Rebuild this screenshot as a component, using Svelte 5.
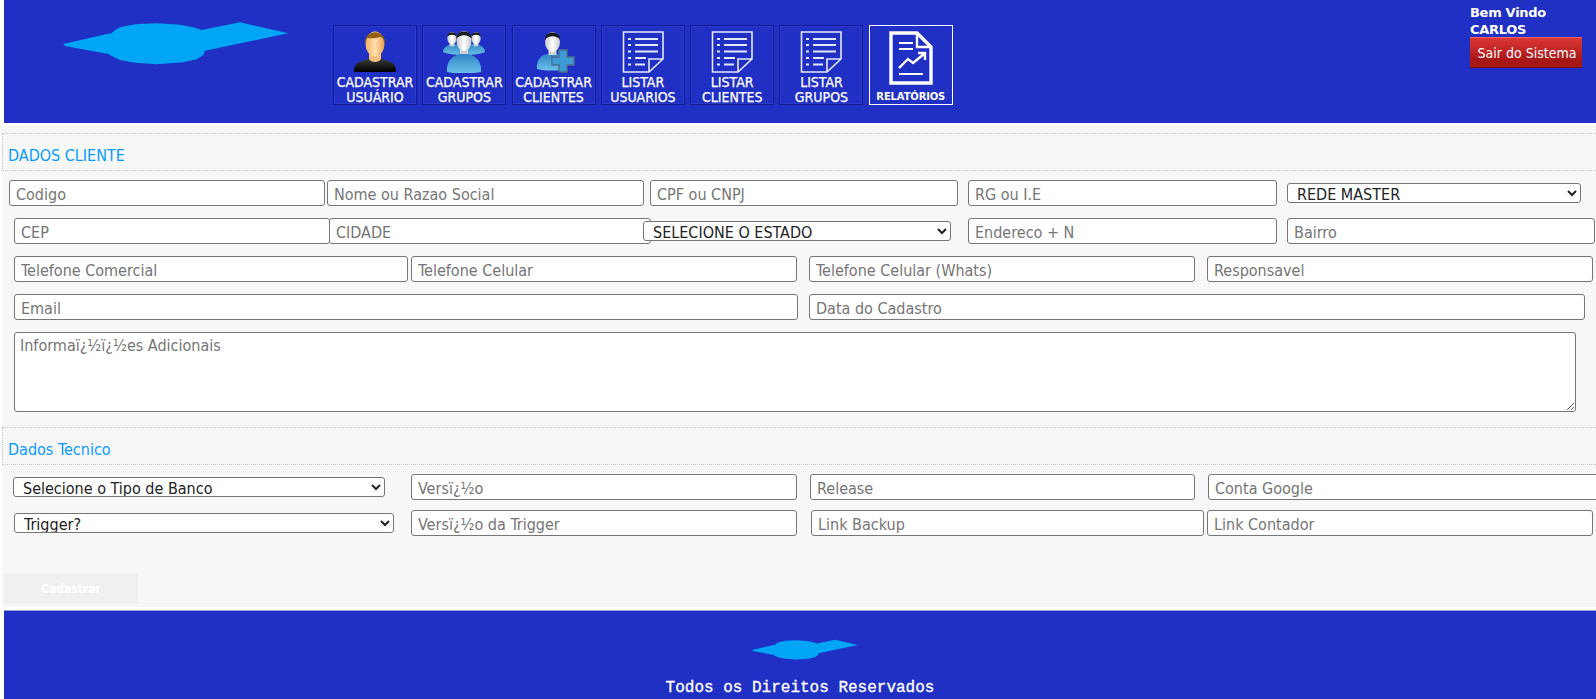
<script>
  const rows = [
    { cls: 'r1', items: [
      { p: 'Codigo', x: 9, e: 325 }, { p: 'Nome ou Razao Social', x: 327, e: 644 }, { p: 'CPF ou CNPJ', x: 650, e: 958 },
      { p: 'RG ou I.E', x: 968, e: 1277 }, { s: 'REDE MASTER', x: 1287, e: 1581 } ] },
    { cls: 'r1', items: [
      { p: 'CEP', x: 14, e: 330 }, { p: 'CIDADE', x: 329, e: 651 }, { s: 'SELECIONE O ESTADO', x: 643, e: 951 },
      { p: 'Endereco + N', x: 968, e: 1277 }, { p: 'Bairro', x: 1287, e: 1595 } ] },
    { cls: 'r1', items: [
      { p: 'Telefone Comercial', x: 14, e: 408 }, { p: 'Telefone Celular', x: 411, e: 797 },
      { p: 'Telefone Celular (Whats)', x: 809, e: 1195 }, { p: 'Responsavel', x: 1207, e: 1593 } ] },
    { cls: 'r1', items: [ { p: 'Email', x: 14, e: 798 }, { p: 'Data do Cadastro', x: 809, e: 1585 } ] }
  ];
  const rows2 = [
    { cls: 'r2', items: [
      { s: 'Selecione o Tipo de Banco', x: 13, e: 385 }, { p: 'Versï¿½o', x: 411, e: 797 },
      { p: 'Release', x: 810, e: 1195 }, { p: 'Conta Google', x: 1208, e: 1610 } ] },
    { cls: 'r2', items: [
      { s: 'Trigger?', x: 14, e: 394 }, { p: 'Versï¿½o da Trigger', x: 411, e: 797 },
      { p: 'Link Backup', x: 811, e: 1204 }, { p: 'Link Contador', x: 1207, e: 1593 } ] }
  ];
  function placed(items) {
    let cur = 0;
    return items.map((it) => {
      const out = { ...it, ml: it.x - cur, w: it.e - it.x };
      cur = it.e;
      return out;
    });
  }
  const logo = 'M70 102 L200 72 L215 70 L225 60 L240 52 L285 43 L350 40 L420 44 L460 52 L485 60 L600 37 L745 70 L495 122 L490 135 L470 148 L430 157 L350 163 L285 158 L240 150 L215 138 L205 132 L75 108 Z';
  const lists = ['USUARIOS', 'CLIENTES', 'GRUPOS'];
</script>

{#snippet fieldRows(list)}
  {#each list as row}
    <div class="row {row.cls}">
      {#each placed(row.items) as f}
        {#if f.s}
          <select class="sel" style="margin-left:{f.ml}px;width:{f.w}px"><option>{f.s}</option></select>
        {:else}
          <input class="inp" placeholder={f.p} style="margin-left:{f.ml}px;width:{f.w}px" />
        {/if}
      {/each}
    </div>
  {/each}
{/snippet}

{#snippet head(cx, cy, s)}
  <g transform="translate({cx} {cy}) scale({s})">
    <path d="M-4 8 L-4 15 L4 15 L4 8 Z" fill="#cfd3d6" />
    <ellipse cx="0" cy="2" rx="7.5" ry="10" fill="url(#face)" />
    <path d="M-7.5 0 C-8 -10 8 -10 7.5 0 C5 -5 -5 -5 -7.5 0 Z" fill="#1a1a1a" />
  </g>
{/snippet}

<svg class="defs" width="0" height="0" aria-hidden="true">
  <defs>
    <linearGradient id="skin" x1="0" x2="1" y1="0" y2="0"><stop offset="0" stop-color="#f0b060" /><stop offset=".5" stop-color="#ffe0b0" /><stop offset="1" stop-color="#eaa050" /></linearGradient>
    <linearGradient id="black" x1="0" x2="0" y1="0" y2="1"><stop offset="0" stop-color="#3a3a3a" /><stop offset="1" stop-color="#000" /></linearGradient>
    <linearGradient id="face" x1="0" x2="1" y1="0" y2="0"><stop offset="0" stop-color="#c4c8cc" /><stop offset=".5" stop-color="#fff" /><stop offset="1" stop-color="#c4c8cc" /></linearGradient>
    <linearGradient id="blue" x1="0" x2="0" y1="0" y2="1"><stop offset="0" stop-color="#2f86c4" /><stop offset="1" stop-color="#6cc0ec" /></linearGradient>
  </defs>
</svg>

<div class="page">
  <header class="top">
    <svg class="logo" viewBox="0 0 810 210"><path d={logo} /></svg>
    <nav class="menu">
      <a class="tile">
        <svg class="ico" viewBox="0 0 44 42">
          <path d="M1 41 C1 33 4 31 15 28 L29 28 C40 31 43 33 43 41 Z" fill="url(#black)" />
          <path d="M16 20 L16 28 C18 32 26 32 28 28 L28 20 Z" fill="#f4bf7c" />
          <ellipse cx="22" cy="13" rx="9.5" ry="12.5" fill="url(#skin)" />
          <path d="M12 14 C10 -3 34 -3 32 14 C31 8 29 6 27 6 C22 8 16 7 14 7 C13 9 12.5 11 12 14 Z" fill="#93610f" />
        </svg>
        <span>CADASTRAR<br />USUÁRIO</span>
      </a>
      <a class="tile">
        <svg class="ico" viewBox="0 0 44 42">
          <path d="M1 21 C1 15 8 13 14 13 L30 13 C36 13 43 15 43 21 C36 25 8 25 1 21 Z" fill="url(#blue)" />
          {@render head(10, 6, 0.62)}
          {@render head(34, 6, 0.62)}
          <path d="M5 41 C4 29 12 24 18 23 L26 23 C32 24 40 29 39 41 C30 43 14 43 5 41 Z" fill="url(#blue)" />
          {@render head(22, 8, 1)}
        </svg>
        <span>CADASTRAR<br />GRUPOS</span>
      </a>
      <a class="tile">
        <svg class="ico" viewBox="0 0 44 42">
          <path d="M5 38 C4 28 10 24 15 23 L26 23 C31 24 35 28 35 38 C27 40 13 40 5 38 Z" fill="url(#blue)" />
          {@render head(20.5, 9, 1)}
          <path d="M27 19 H35 V26 H42 V34 H35 V41 H27 V34 H20 V26 H27 Z" fill="#3d9ad2" stroke="#4a6f92" stroke-width="1.4" />
        </svg>
        <span>CADASTRAR<br />CLIENTES</span>
      </a>
      {#each lists as l}
        <a class="tile">
          <svg class="ico" viewBox="0 0 44 42" fill="none" stroke="#e4e8fb">
            <path d="M2.5 1 H42 V28 L28 41 H2.5 Z M42 28 H28 V41" stroke-width="1.6" />
            <g stroke-width="2">
              <path d="M7 8 H10 M14 8 H37 M7 14 H10 M14 14 H37 M7 20.5 H10 M14 20.5 H37 M7 27 H10 M14 27 H25 M7 33.5 H10 M14 33.5 H24" />
            </g>
          </svg>
          <span>LISTAR<br />{l}</span>
        </a>
      {/each}
      <a class="tile report">
        <svg class="rep" viewBox="0 0 44 54" fill="none" stroke="#fff">
          <path d="M2 2 H28 L42 16 V52 H2 Z" stroke-width="3.4" />
          <path d="M28 2 V16 H42" stroke-width="2.4" />
          <path d="M10 12 H24 M10 18 H24 M10 43 H34" stroke-width="2" />
          <path d="M10 37 L19 28 L24 32 L35 23 M29 22 H36 V29" stroke-width="2.4" />
        </svg>
        <span>RELATÓRIOS</span>
      </a>
    </nav>
    <div class="user">
      <div class="welcome">Bem Vindo<br />CARLOS</div>
      <button class="logout">Sair do Sistema</button>
    </div>
  </header>

  <main class="form">
    <h2 class="sect first">DADOS CLIENTE</h2>
    {@render fieldRows(rows)}
    <textarea class="area" placeholder="Informaï¿½ï¿½es Adicionais"></textarea>
    <h2 class="sect second">Dados Tecnico</h2>
    {@render fieldRows(rows2)}
    <button class="save">Cadastrar</button>
  </main>

  <footer class="foot">
    <svg class="flogo" viewBox="0 0 810 210"><path d={logo} /></svg>
    <p>Todos os Direitos Reservados</p>
  </footer>
</div>

<style>
  :global(body) { margin: 0; background: #fff; overflow: hidden; }
  .defs { position: absolute; }
  .page { width: 1596px; height: 699px; overflow: hidden; font-family: "DejaVu Sans Condensed", "DejaVu Sans", sans-serif; }
  .top { display: flex; align-items: flex-start; height: 123px; margin-left: 4px; background: #2130c4; box-sizing: border-box; }
  .logo { width: 270px; height: 70px; margin: 10px 0 0 36px; flex: none; fill: #00a6f5; }
  .menu { display: flex; gap: 5.3px; margin: 25px 0 0 23px; }
  .tile { width: 84px; height: 80px; box-sizing: border-box; border: 1px solid #121c96; box-shadow: inset 0 0 0 1px #2b3ac9; display: flex; flex-direction: column; align-items: center; color: #fff; text-align: center; padding-top: 5px; font-size: 14px; line-height: 15px; white-space: nowrap; -webkit-text-stroke: 0.25px #fff; }
  .ico { width: 44px; height: 42px; flex: none; margin-bottom: 1.5px; }
  .report { border-color: #fff; box-shadow: none; -webkit-text-stroke: 0; }
  .rep { width: 44px; height: 54px; flex: none; }
  .report span { font-size: 10px; font-weight: 700; line-height: 12px; margin-top: 6px; letter-spacing: -0.15px; font-family: "DejaVu Sans", sans-serif; }
  .user { margin: 4px 14px 0 auto; width: 112px; }
  .welcome { color: #fff; font-weight: 700; font-size: 13px; line-height: 17px; font-family: "DejaVu Sans", sans-serif; letter-spacing: -0.3px; height: 33px; }
  .logout { display: block; width: 112px; height: 31px; padding: 0 0 0 2px; border: 0; border-top: 1px solid #e8686a; border-bottom: 1px solid #7c0e0e; background: linear-gradient(#dc3636, #a81717 75%); color: #fff; font: 14px "DejaVu Sans Condensed", "DejaVu Sans", sans-serif; }

  .form { margin: 3px 0 0 2px; background: #f7f7f7; height: 481px; overflow: hidden; display: flow-root; }
  .sect { margin: 7px 0 9px; height: 38px; box-sizing: border-box; border: 1px dotted #c4c4c4; border-right: 0; color: #0a9bff; font-size: 16px; font-weight: 400; padding: 12px 0 0 5px; line-height: 20px; }
  .second { margin-top: 15px; }
  .row { display: flex; align-items: center; height: 26px; margin-left: -2px; }
  .r1 { margin-bottom: 12px; }
  .r2 { margin-bottom: 10px; }
  .inp, .sel, .area { box-sizing: border-box; flex: none; font: 16px "DejaVu Sans Condensed", "DejaVu Sans", sans-serif; }
  .inp { height: 26px; border: 1px solid #767676; border-radius: 3px; padding: 2px 6px 0; background: #fff; outline: 0; position: relative; }
  .sel { height: 20px; border: 1px solid #767676; border-radius: 3px; padding: 0 0 0 5px; background-color: #fff; color: #222; position: relative; z-index: 1; }
  .inp::placeholder, .area::placeholder { color: #757575; opacity: 1; }
  .area { display: block; width: 1562px; height: 80px; margin: 0 0 0 12px; border: 1px solid #767676; border-radius: 3px; padding: 3px 5px; background: #fff; }
  .save { display: block; width: 134px; height: 30px; margin: 38px 0 0 2px; border: 0; background: #f0f0f0; color: #fff; font: 700 12px "DejaVu Sans Condensed", "DejaVu Sans", sans-serif; padding: 0; }
  .foot { margin: 3px 0 0 4px; height: 89px; box-sizing: border-box; border-top: 1px solid #9a9fc6; background: #2130c4; display: flow-root; text-align: center; overflow: hidden; }
  .flogo { display: block; width: 127px; height: 33px; margin: 23px 0 0 737px; fill: #00a6f5; }
  .foot p { margin: 11px 0 0; padding-right: 0; color: #fff; font: 16px/20px "Liberation Mono", monospace; -webkit-text-stroke: 0.3px #fff; }
</style>
